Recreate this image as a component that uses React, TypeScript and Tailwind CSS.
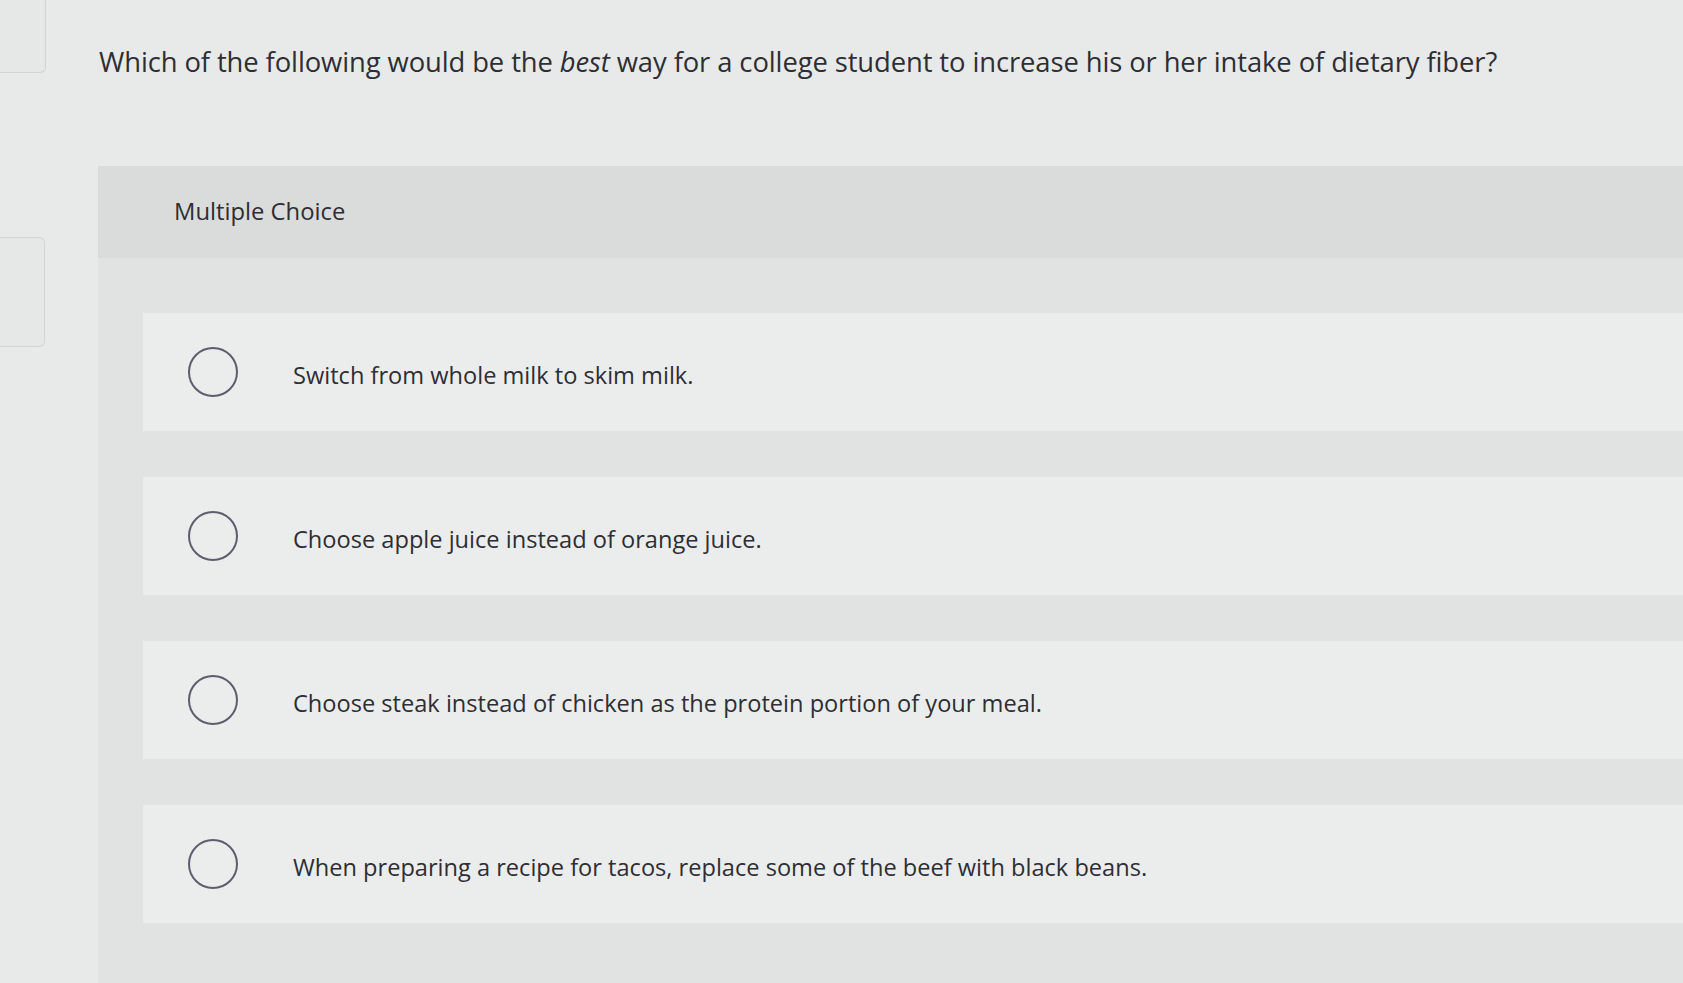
import React from "react";

const options = [
  "Switch from whole milk to skim milk.",
  "Choose apple juice instead of orange juice.",
  "Choose steak instead of chicken as the protein portion of your meal.",
  "When preparing a recipe for tacos, replace some of the beef with black beans.",
];

export default function App() {
  return (
    <div
      className="relative h-[983px] w-[1683px] overflow-hidden bg-[#e8eae9] text-[#2e2e34]"
      style={{ fontFamily: "'Open Sans', Lato, sans-serif" }}
    >
      {/* left sidebar fragments */}
      <div className="absolute left-0 top-0 h-[73px] w-[46px] rounded-br-[6px] border-b border-r border-[#d2d4d3] bg-[#e6e8e7]" />
      <div className="absolute left-0 top-[237px] h-[110px] w-[45px] rounded-r-[6px] border-y border-r border-[#d2d4d3] bg-[#e6e8e7]" />

      <div className="pl-[99px] pt-[44px]">
        <p className="text-[27.4px] leading-[36px] tracking-[-0.1px]">
          Which of the following would be the <em>best</em> way for a college student to increase his or her intake of dietary fiber?
        </p>
      </div>

      <div className="ml-[98px] mt-[86px] bg-[#e1e3e2] pb-[60px]">
        <div className="flex h-[92px] items-center bg-[#dadcdb] pl-[76px]">
          <span className="text-[23.8px]">Multiple Choice</span>
        </div>
        <div className="flex flex-col gap-[46px] pl-[45px] pt-[55px]">
          {options.map((o) => (
            <div key={o} className="flex h-[118px] items-center bg-[#ebedec]">
              <div className="ml-[45px] h-[50px] w-[50px] shrink-0 rounded-full border-[2.5px] border-[#5c5e6d]" />
              <span className="ml-[55px] mt-[8px] text-[23.6px]">{o}</span>
            </div>
          ))}
        </div>
      </div>
    </div>
  );
}
